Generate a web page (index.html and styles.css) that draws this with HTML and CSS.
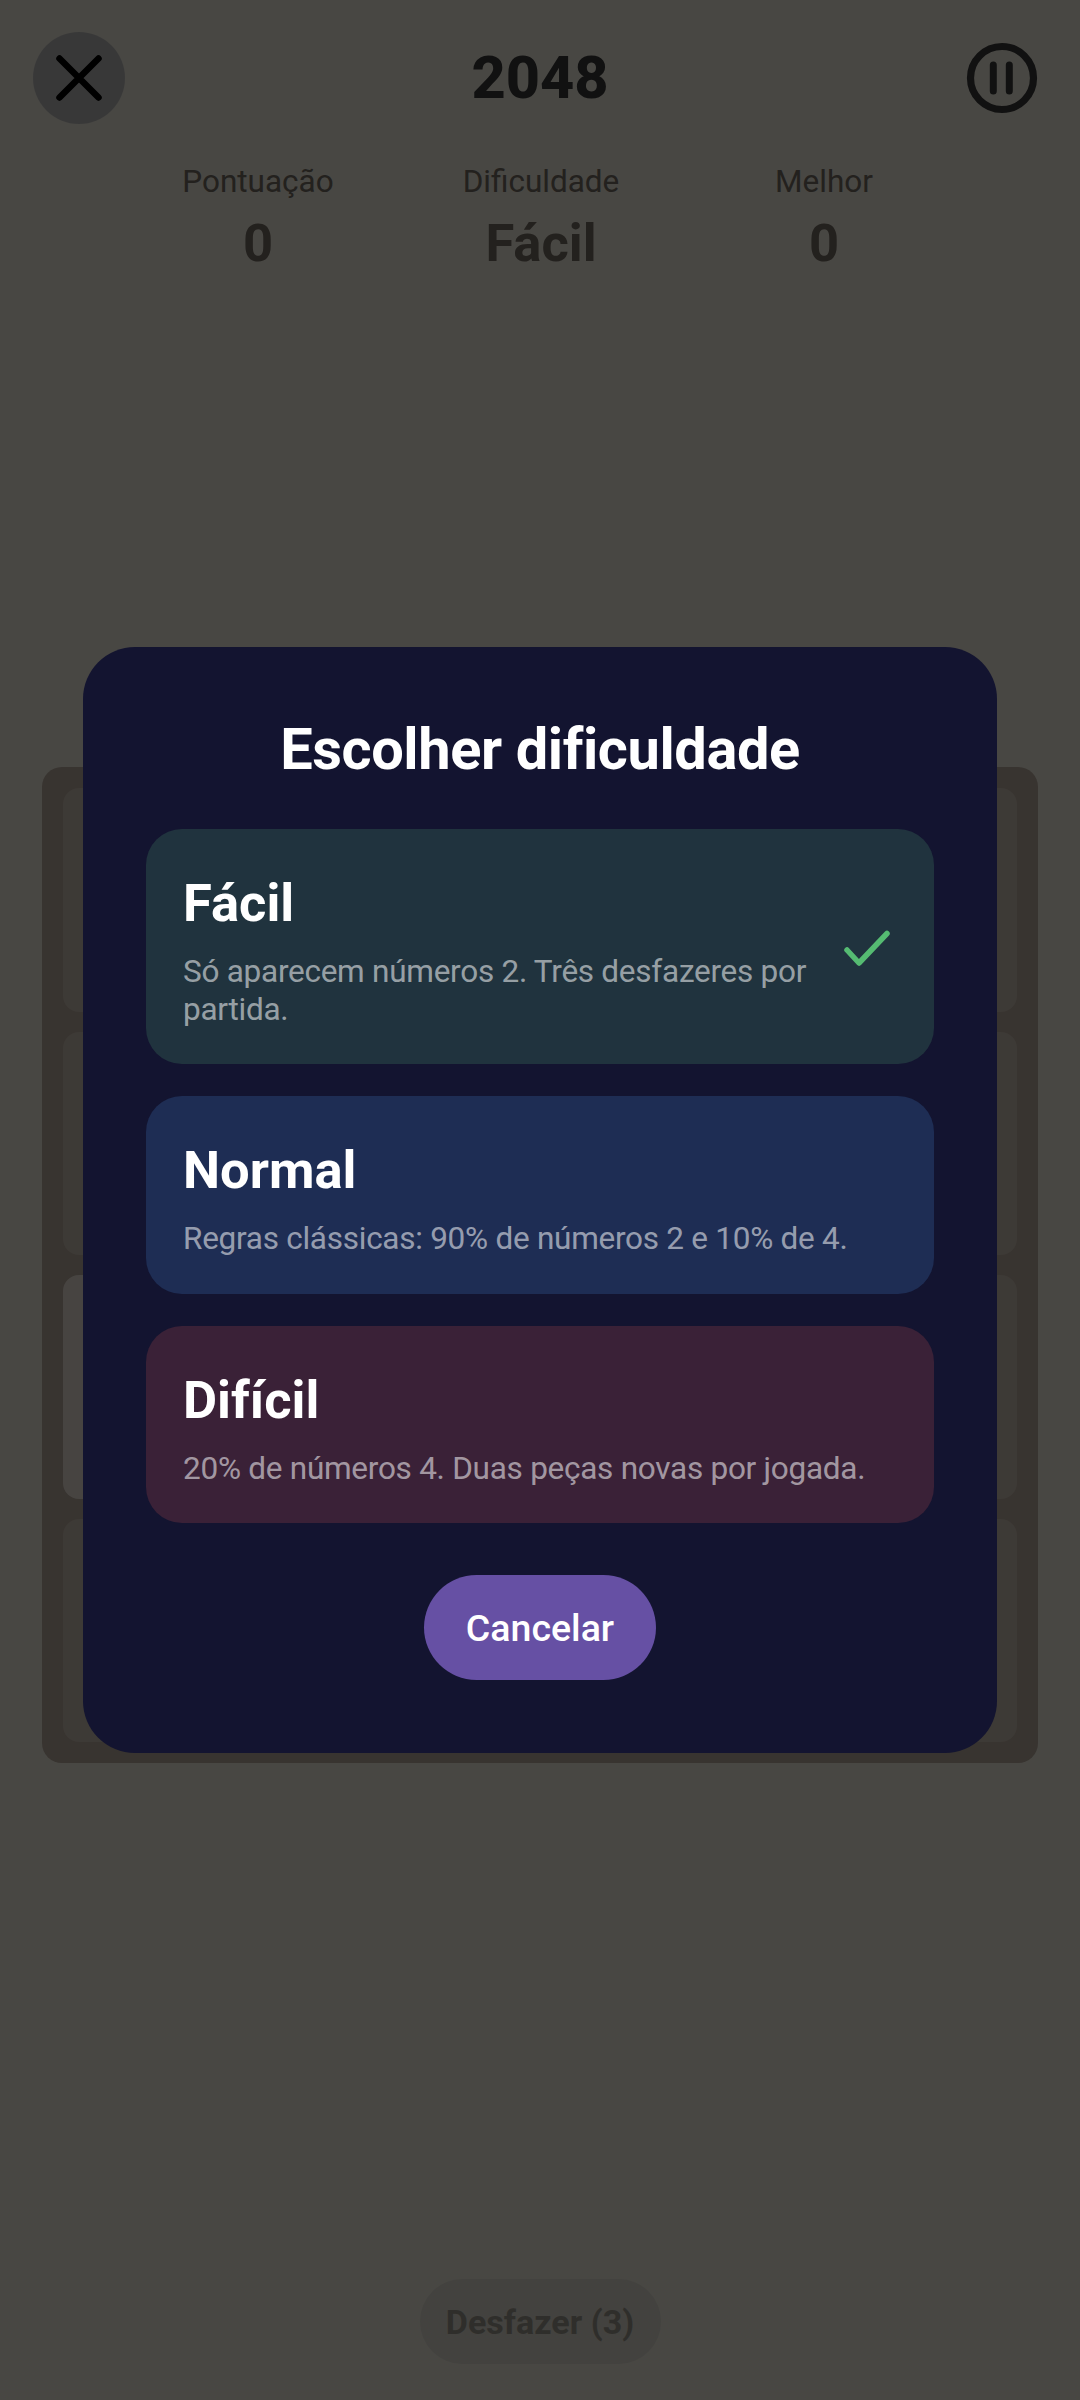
FILE: index.html
```html
<!DOCTYPE html>
<html lang="pt">
<head>
    <meta charset="UTF-8">
    <meta name="viewport" content="width=device-width, initial-scale=1.0">
    <title>2048</title>
    <link rel="stylesheet" href="styles.css">
</head>
<body>
    <div class="game">
        <div class="top-bar">
            <button class="close-btn" aria-label="Fechar">
                <svg width="92" height="92" viewBox="0 0 92 92">
                    <path d="M26.5 26.5L65.5 65.5M65.5 26.5L26.5 65.5" fill="none" stroke="#000" stroke-width="6.5" stroke-linecap="round"/>
                </svg>
            </button>
            <h1>2048</h1>
            <button class="pause-btn" aria-label="Pausar">
                <svg width="72" height="72" viewBox="0 0 72 72">
                    <circle cx="36" cy="36" r="31.5" fill="none" stroke="#3a3a3a" stroke-width="7.2"/>
                    <path d="M27.3 23.1V48.9M43.3 23.1V48.9" fill="none" stroke="#3a3a3a" stroke-width="7" stroke-linecap="round"/>
                </svg>
            </button>
        </div>

        <div class="stats">
            <div class="stat">
                <span class="stat-label">Pontuação</span>
                <span class="stat-value">0</span>
            </div>
            <div class="stat">
                <span class="stat-label">Dificuldade</span>
                <span class="stat-value">Fácil</span>
            </div>
            <div class="stat">
                <span class="stat-label">Melhor</span>
                <span class="stat-value">0</span>
            </div>
        </div>

        <div class="board">
            <div class="tile"></div><div class="tile"></div><div class="tile"></div><div class="tile"></div>
            <div class="tile"></div><div class="tile"></div><div class="tile"></div><div class="tile"></div>
            <div class="tile tile-2"></div><div class="tile"></div><div class="tile"></div><div class="tile"></div>
            <div class="tile"></div><div class="tile"></div><div class="tile"></div><div class="tile"></div>
        </div>

        <button class="undo-btn">Desfazer (3)</button>
    </div>

    <div class="scrim">
        <div class="dialog">
            <h2>Escolher dificuldade</h2>

            <div class="option option-easy">
                <div class="option-text">
                    <h3>Fácil</h3>
                    <p>Só aparecem números 2. Três desfazeres por partida.</p>
                </div>
                <svg class="check" width="63" height="63" viewBox="0 0 63 63">
                    <path d="M13 31L25 44L53 14.5" fill="none" stroke="#55bb72" stroke-width="5.5" stroke-linecap="round" stroke-linejoin="round"/>
                </svg>
            </div>

            <div class="option option-normal">
                <div class="option-text">
                    <h3>Normal</h3>
                    <p>Regras clássicas: 90% de números 2 e 10% de 4.</p>
                </div>
            </div>

            <div class="option option-hard">
                <div class="option-text">
                    <h3>Difícil</h3>
                    <p>20% de números 4. Duas peças novas por jogada.</p>
                </div>
            </div>

            <button class="cancel-btn">Cancelar</button>
        </div>
    </div>
</body>
</html>
```

FILE: styles.css
```css
* {
    margin: 0;
    padding: 0;
    box-sizing: border-box;
}

body {
    font-family: 'Roboto', sans-serif;
    width: 1080px;
    height: 2400px;
    background: #f0ede0;
    color: #776e65;
    overflow: hidden;
    position: relative;
}

button {
    font-family: inherit;
    border: none;
    background: none;
}

.game {
    height: 100%;
    display: flex;
    flex-direction: column;
    align-items: center;
    padding: 32px 42px 36px;
}

.top-bar {
    width: 100%;
    display: flex;
    justify-content: space-between;
    align-items: center;
}

.top-bar h1 {
    font-size: 59.5px;
    font-weight: 800;
    line-height: 68px;
    color: #3a3a3a;
    margin-left: -11px;
}

.close-btn {
    width: 92px;
    height: 92px;
    margin-left: -9px;
    border-radius: 50%;
    background: #bdbdbd;
    display: flex;
}

.pause-btn {
    width: 72px;
    height: 72px;
    display: flex;
}

.stats {
    display: grid;
    grid-template-columns: repeat(3, 283px);
    margin: 38px 0 0 2px;
}

.stat {
    display: flex;
    flex-direction: column;
    align-items: center;
}

.stat-label {
    font-size: 31.5px;
    line-height: 40px;
}

.stat-value {
    font-size: 52.5px;
    font-weight: 700;
    line-height: 62px;
    margin-top: 10px;
}

.board {
    width: 996px;
    height: 996px;
    margin-top: 493px;
    padding: 21px;
    display: grid;
    grid-template-columns: repeat(4, 1fr);
    grid-template-rows: repeat(4, 1fr);
    gap: 20px;
    background: #bbada0;
    border-radius: 20px;
}

.tile {
    background: #cdc1b4;
    border-radius: 16px;
}

.tile-2 {
    background: #eee4da;
}

.undo-btn {
    width: 241px;
    height: 85px;
    margin-top: auto;
    border-radius: 43px;
    background: #e0ddd2;
    color: #9e9b90;
    font-size: 34.1px;
    font-weight: 700;
}

/* dialog */
.scrim {
    position: absolute;
    top: 0;
    left: 0;
    width: 100%;
    height: 100%;
    background: rgba(0, 0, 0, 0.7);
    display: flex;
    justify-content: center;
    padding-top: 647px;
    align-items: flex-start;
}

.dialog {
    width: 914px;
    padding: 68px 63px 73px;
    background: #131430;
    border-radius: 52px;
    display: flex;
    flex-direction: column;
    align-items: center;
    color: #fff;
}

.dialog h2 {
    font-size: 57.75px;
    font-weight: 700;
    line-height: 68px;
    letter-spacing: -0.4px;
    margin-bottom: 46px;
}

.option {
    width: 100%;
    padding: 43px 37px 36px;
    border-radius: 36px;
    display: flex;
    align-items: center;
    margin-bottom: 32px;
}

.option-easy { background: #20333e; }
.option-normal { background: #1e2d54; }
.option-hard { background: #3a2137; }

.option-text {
    flex: 1;
}

.option h3 {
    font-size: 52.5px;
    font-weight: 700;
    line-height: 62px;
    margin-bottom: 19px;
}

.option p {
    font-size: 31.5px;
    line-height: 37.5px;
    letter-spacing: -0.26px;
    color: rgba(255, 255, 255, 0.55);
}

.check {
    flex-shrink: 0;
    margin-left: 16px;
}

.cancel-btn {
    width: 232px;
    height: 105px;
    margin-top: 20px;
    border-radius: 53px;
    background: #6650a4;
    color: #fff;
    font-size: 37.5px;
    font-weight: 500;
}
```
